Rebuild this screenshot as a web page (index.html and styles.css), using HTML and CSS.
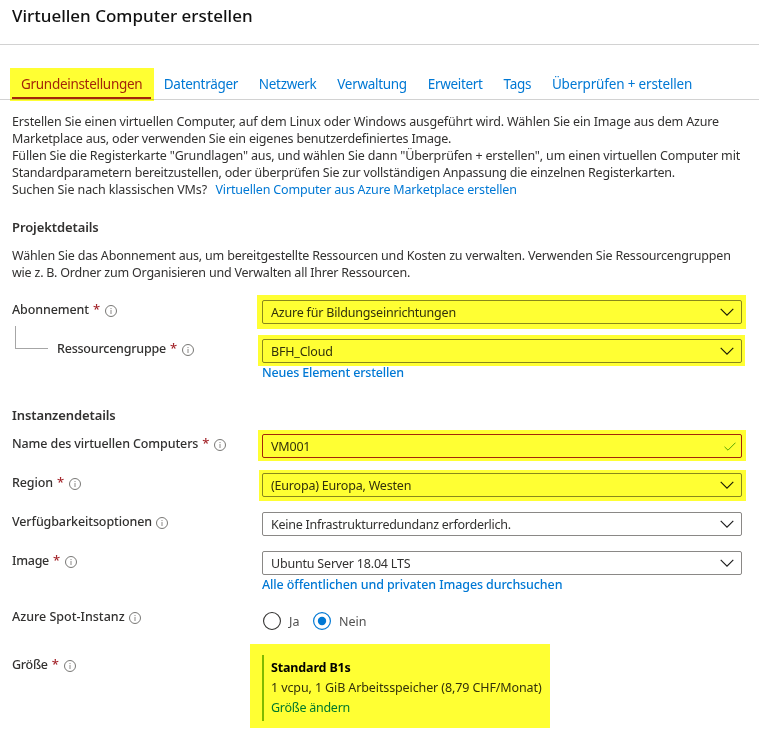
FILE: index.html
```
<!DOCTYPE html>
<html lang="de">
<head>
<meta charset="utf-8">
<title>Virtuellen Computer erstellen</title>
<link rel="stylesheet" href="styles.css">
</head>
<body>
<svg width="0" height="0" class="defs">
  <symbol id="info" viewBox="0 0 12 12"><circle cx="6" cy="6" r="5.5" fill="none" stroke="#605e5c" stroke-width=".85"/><path d="M6 5v4M6 3v1.1" stroke="#8a8886" stroke-width="1"/></symbol>
  <symbol id="chevron" viewBox="0 0 14 8"><path d="M.7.8 7 7.1 13.3.8" fill="none" stroke="#1b1b1b" stroke-width="1.15"/></symbol>
  <symbol id="check" viewBox="0 0 12 9"><path d="M.5 4.8 4 8.2 11.5.7" fill="none" stroke="#57a300" stroke-width="1"/></symbol>
</svg>
<header class="header"><h1>Virtuellen Computer erstellen</h1></header>
<nav class="tabs">
  <a class="tab active marked">Grundeinstellungen</a>
  <a class="tab">Datenträger</a>
  <a class="tab">Netzwerk</a>
  <a class="tab">Verwaltung</a>
  <a class="tab">Erweitert</a>
  <a class="tab">Tags</a>
  <a class="tab last">Überprüfen + erstellen</a>
</nav>
<main>
  <div class="intro">
    <p class="s15">Erstellen Sie einen virtuellen Computer, auf dem Linux oder Windows ausgeführt wird. Wählen Sie ein Image aus dem Azure</p>
    <p class="s19">Marketplace aus, oder verwenden Sie ein eigenes benutzerdefiniertes Image.</p>
    <p class="s16">Füllen Sie die Registerkarte "Grundlagen" aus, und wählen Sie dann "Überprüfen + erstellen", um einen virtuellen Computer mit</p>
    <p class="s20">Standardparametern bereitzustellen, oder überprüfen Sie zur vollständigen Anpassung die einzelnen Registerkarten.</p>
    <p class="s11">Suchen Sie nach klassischen VMs?<a class="inline-link s17">Virtuellen Computer aus Azure Marketplace erstellen</a></p>
  </div>
  <h2>Projektdetails</h2>
  <div class="intro project">
    <p class="s19">Wählen Sie das Abonnement aus, um bereitgestellte Ressourcen und Kosten zu verwalten. Verwenden Sie Ressourcengruppen</p>
    <p class="s21">wie z. B. Ordner zum Organisieren und Verwalten all Ihrer Ressourcen.</p>
  </div>
  <section class="form">
    <div class="row">
      <div class="label">Abonnement<b>*</b><svg><use href="#info"/></svg></div>
      <div class="field marked m-sub"><span>Azure für Bildungseinrichtungen</span><svg class="chev"><use href="#chevron"/></svg></div>
    </div>
    <div class="row">
      <div class="label child s21"><i class="branch"></i>Ressourcengruppe<b>*</b><svg><use href="#info"/></svg></div>
      <div class="field marked m-group"><span>BFH_Cloud</span><svg class="chev"><use href="#chevron"/></svg></div>
    </div>
  </section>
  <a class="below s17">Neues Element erstellen</a>
  <h2 class="instance">Instanzendetails</h2>
  <section class="form">
    <div class="row">
      <div class="label">Name des virtuellen Computers<b>*</b><svg><use href="#info"/></svg></div>
      <div class="field edited marked m-name"><span>VM001</span><svg class="check"><use href="#check"/></svg></div>
    </div>
    <div class="row">
      <div class="label">Region<b>*</b><svg><use href="#info"/></svg></div>
      <div class="field marked m-region"><span>(Europa) Europa, Westen</span><svg class="chev"><use href="#chevron"/></svg></div>
    </div>
    <div class="row">
      <div class="label">Verfügbarkeitsoptionen<svg><use href="#info"/></svg></div>
      <div class="field"><span class="s26">Keine Infrastrukturredundanz erforderlich.</span><svg class="chev"><use href="#chevron"/></svg></div>
    </div>
    <div class="row">
      <div class="label s26">Image<b>*</b><svg><use href="#info"/></svg></div>
      <div class="field"><span class="s20">Ubuntu Server 18.04 LTS</span><svg class="chev"><use href="#chevron"/></svg></div>
    </div>
  </section>
  <a class="below s11">Alle öffentlichen und privaten Images durchsuchen</a>
  <div class="row spot">
    <div class="label spot-label">Azure Spot-Instanz<svg><use href="#info"/></svg></div>
    <div class="radios">
      <svg viewBox="0 0 18 18"><circle cx="9" cy="9" r="8.45" fill="none" stroke="#323130" stroke-width="1.1"/></svg><span class="ja">Ja</span>
      <svg viewBox="0 0 18 18"><circle cx="9" cy="9" r="8.4" fill="none" stroke="#0078d4" stroke-width="1.2"/><circle cx="9" cy="9" r="4.2" fill="#0078d4"/></svg><span>Nein</span>
    </div>
  </div>
  <div class="row size-row">
    <div class="label s26">Größe<b>*</b><svg><use href="#info"/></svg></div>
    <div class="size marked m-size">
      <strong>Standard B1s</strong>
      <span class="s11">1 vcpu, 1 GiB Arbeitsspeicher (8,79 CHF/Monat)</span>
      <a class="s26">Größe ändern</a>
    </div>
  </div>
</main>
</body>
</html>
```
FILE: styles.css
```
* { box-sizing: border-box; }
body {
  margin: 0;
  height: 745px;
  overflow: hidden;
  background: #fff;
  color: #323130;
  font: 12.5px/17px "Noto Sans", "Segoe UI", sans-serif;
}
.defs { display: block; }
h1, h2, p { margin: 0; white-space: nowrap; }
a { color: #0078d4; }

.header { height: 45px; border-bottom: 1px solid #d2d2d2; padding-left: 12px; }
h1 { font-size: 17px; font-weight: 500; line-height: 32px; color: #111; }

.tabs {
  display: flex;
  gap: 3.8px;
  height: 32px;
  margin-top: 23px;
  padding-left: 12px;
  border-bottom: 1px solid #d2d2d2;
}
.tab {
  padding: 0 8px 0 9px;
  font-size: 13.5px;
  letter-spacing: -.3px;
  line-height: 33px;
  height: 31px;
  white-space: nowrap;
}
.tab.last { letter-spacing: -.17px; }
.tab.active { color: #a4262c; border-bottom: 2px solid #a4262c; width: 139px; }

/* Highlighter marks drawn over the marked elements */
.marked { position: relative; }
.marked::after {
  content: "";
  position: absolute;
  inset: var(--mark);
  background: #ffff33;
  mix-blend-mode: multiply;
  pointer-events: none;
}
.tab.marked { --mark: 0 -3px -4px -2px; }
.m-sub { --mark: -6px -5px -6px -6px; }
.m-group { --mark: -5px -4px -4px -5px; }
.m-name { --mark: -5px -5px -4px -5px; }
.m-region { --mark: -4px -5px -5px -4px; }
.m-size { --mark: -11px -8px -7px -14px; }

main { padding: 13px 0 0 12px; }
.inline-link { margin-left: 8.5px; }
h2 { font-size: 13px; font-weight: 600; line-height: 18px; letter-spacing: -.1px; margin-top: 20px; }
.project { margin: 11px 0 19px; }

.form { display: grid; gap: 15px; }
.row { display: grid; grid-template-columns: 250px 480px; height: 24px; }
.label {
  display: flex;
  align-items: center;
  height: 18px;
  font-weight: 500;
  letter-spacing: -.12px;
  white-space: nowrap;
}
.label b { margin: 0 2px 0 4px; color: #a4262c; font-size: 13px; font-weight: 500; width: 6px; }
.label svg { width: 12px; height: 12px; margin: 3px 0 0 4px; }
.child { padding-left: 45px; position: relative; }
.branch {
  position: absolute;
  left: 3px;
  top: -13px;
  width: 33px;
  height: 23px;
  border: solid #a6a6a6;
  border-width: 0 0 1px 1px;
}
.field {
  display: flex;
  align-items: center;
  justify-content: space-between;
  height: 24px;
  padding: 1px 7px 0 8px;
  border: 1px solid #8a8886;
  border-radius: 2px;
  letter-spacing: -.2px;
}
.edited { border-color: #a4262c; padding-right: 5px; }
.chev { width: 14px; height: 8px; margin-top: -1px; }
.check { width: 12px; height: 9px; margin-top: -1px; }

.below { display: block; margin-left: 250px; padding-top: 1px; height: 18px; line-height: 18px; font-weight: 500; }
h2.instance { margin: 25px 0 10px; }

.spot { margin-top: 15px; }
.radios { display: flex; align-items: center; height: 26px; padding-left: 1px; color: #505050; }
.radios svg { width: 18px; height: 18px; margin-right: 8px; }
.ja { width: 24px; }
.spot-label { margin-top: -1px; letter-spacing: 0; }
.size-row { margin-top: 23px; height: 66px; }
.size {
  display: flex;
  flex-direction: column;
  width: 280px;
  height: 66px;
  padding: 3px 0 0 7px;
  border-left: 2px solid #7fba00;
  line-height: 20px;
  white-space: nowrap;
}
.size strong { color: #000; font-weight: 700; letter-spacing: -.15px; }

.s11 { letter-spacing: -.11px; }
.s15 { letter-spacing: -.15px; }
.s16 { letter-spacing: -.162px; }
.s17 { letter-spacing: -.172px; }
.s19 { letter-spacing: -.19px; }
.s20 { letter-spacing: -.2px; }
.s21 { letter-spacing: -.214px; }
.s26 { letter-spacing: -.26px; }
```
